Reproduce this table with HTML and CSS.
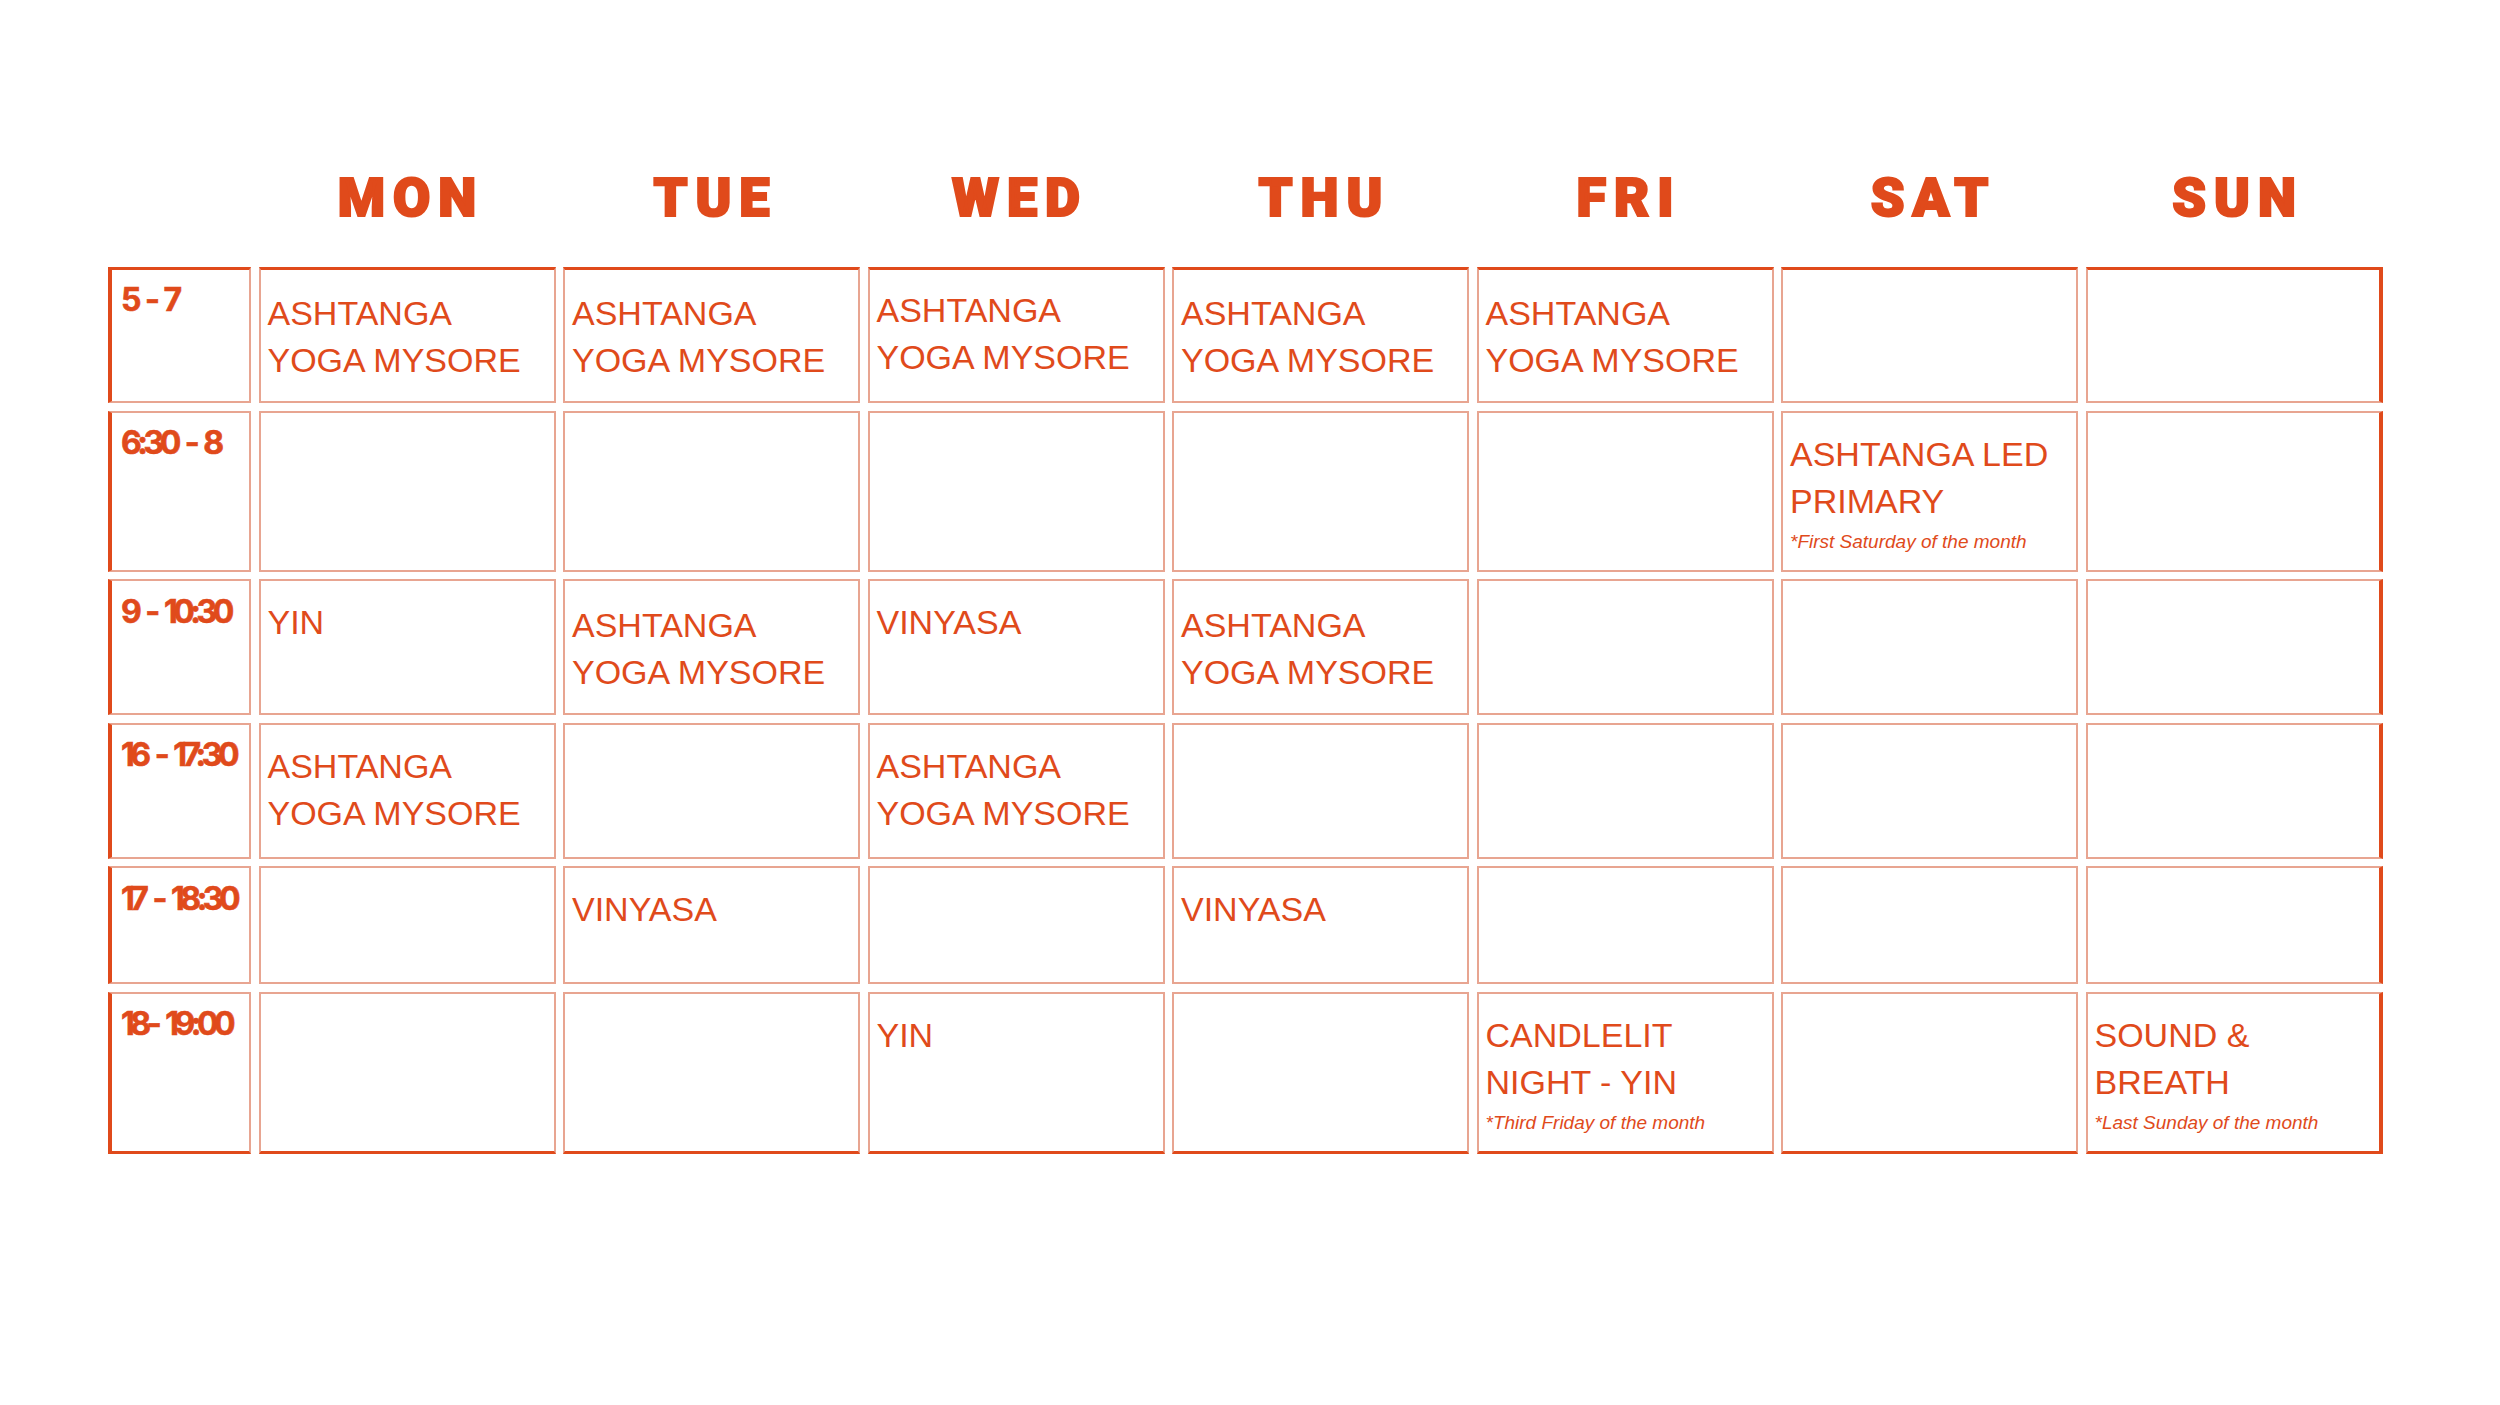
FILE: index.html
```html
<!DOCTYPE html>
<html lang="en">
<head>
<meta charset="utf-8">
<title>Class Schedule</title>
<link rel="stylesheet" href="styles.css">
</head>
<body>
<div class="page">
  <div class="days">
    <div></div>
    <div class="day">MON</div>
    <div class="day">TUE</div>
    <div class="day">WED</div>
    <div class="day">THU</div>
    <div class="day">FRI</div>
    <div class="day">SAT</div>
    <div class="day">SUN</div>
  </div>
  <div class="grid">
    <div class="cell time r1">5 - 7</div>
    <div class="cell r1">ASHTANGA YOGA MYSORE</div>
    <div class="cell r1">ASHTANGA YOGA MYSORE</div>
    <div class="cell r1 up">ASHTANGA YOGA MYSORE</div>
    <div class="cell r1">ASHTANGA YOGA MYSORE</div>
    <div class="cell r1">ASHTANGA YOGA MYSORE</div>
    <div class="cell r1"></div>
    <div class="cell r1 last"></div>

    <div class="cell time">6:30 - 8</div>
    <div class="cell"></div>
    <div class="cell"></div>
    <div class="cell"></div>
    <div class="cell"></div>
    <div class="cell"></div>
    <div class="cell">ASHTANGA LED PRIMARY<p class="note">*First Saturday of the month</p></div>
    <div class="cell last"></div>

    <div class="cell time">9 - 10:30</div>
    <div class="cell">YIN</div>
    <div class="cell down">ASHTANGA YOGA MYSORE</div>
    <div class="cell">VINYASA</div>
    <div class="cell down">ASHTANGA YOGA MYSORE</div>
    <div class="cell"></div>
    <div class="cell"></div>
    <div class="cell last"></div>

    <div class="cell time">16 - 17:30</div>
    <div class="cell">ASHTANGA YOGA MYSORE</div>
    <div class="cell"></div>
    <div class="cell">ASHTANGA YOGA MYSORE</div>
    <div class="cell"></div>
    <div class="cell"></div>
    <div class="cell"></div>
    <div class="cell last"></div>

    <div class="cell time">17 - 18:30</div>
    <div class="cell"></div>
    <div class="cell">VINYASA</div>
    <div class="cell"></div>
    <div class="cell">VINYASA</div>
    <div class="cell"></div>
    <div class="cell"></div>
    <div class="cell last"></div>

    <div class="cell time r6">18- 19:00</div>
    <div class="cell r6"></div>
    <div class="cell r6"></div>
    <div class="cell r6">YIN</div>
    <div class="cell r6"></div>
    <div class="cell r6">CANDLELIT NIGHT - YIN<p class="note">*Third Friday of the month</p></div>
    <div class="cell r6"></div>
    <div class="cell r6 last">SOUND &amp; BREATH<p class="note">*Last Sunday of the month</p></div>
  </div>
</div>
</body>
</html>
```
FILE: styles.css
```css
* { box-sizing: border-box; }
html, body { margin: 0; padding: 0; background: #ffffff; }
body { color: #e04a1b; font-family: "Liberation Sans", Arial, sans-serif; }

.page {
  width: 2500px;
  height: 1405px;
  padding: 171px 0 0 108px;
}

.days {
  display: grid;
  grid-template-columns: 143px repeat(7, 297px);
  column-gap: 7.5px;
  height: 55px;
  margin-bottom: 41px;
}

.day {
  font-family: Roboto, "Liberation Sans", sans-serif;
  font-weight: 900;
  font-size: 54px;
  line-height: 54px;
  letter-spacing: 8px;
  padding-left: 8px;
  text-align: center;
  -webkit-text-stroke: 2.2px #e04a1b;
}

.grid {
  display: grid;
  grid-template-columns: 143px repeat(7, 297px);
  grid-template-rows: 136px 161px 136px 136px 118px 162px;
  column-gap: 7.5px;
  row-gap: 7.5px;
}

.cell {
  border: 2px solid #e8a591;
  padding: 18px 6px 0 7px;
  font-size: 34px;
  line-height: 47px;
}

.cell.r1 { border-top: 3px solid #e04a1b; padding-top: 20px; }
.cell.r1.up { padding-top: 17px; }
.cell.down { padding-top: 21px; }
.cell.r6 { border-bottom: 3px solid #e04a1b; }
.cell.last { border-right: 4px solid #e04a1b; }

.cell.time {
  border-left: 4px solid #e04a1b;
  padding: 14.5px 0 0 9px;
  font-family: Inter, "Liberation Sans", sans-serif;
  font-weight: 700;
  font-size: 32px;
  line-height: 32px;
  letter-spacing: -4.5px;
  word-spacing: 5px;
  white-space: nowrap;
  -webkit-text-stroke: 0.6px #e04a1b;
}
.cell.time.r1 { padding-top: 13.5px; }

.note {
  margin: 4px 0 0 0;
  font-style: italic;
  font-size: 19px;
  line-height: 26px;
}
```
